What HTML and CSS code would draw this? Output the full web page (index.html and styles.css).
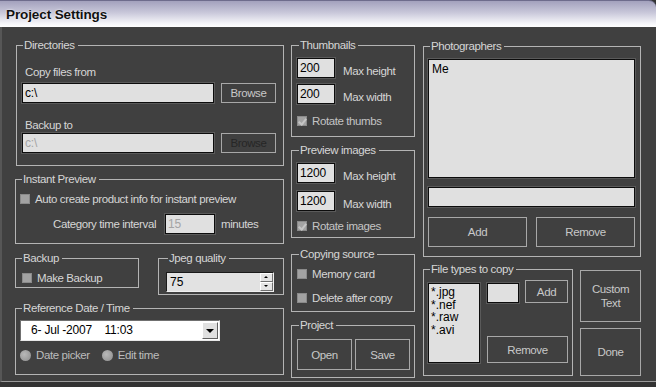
FILE: index.html
```html
<!DOCTYPE html>
<html lang="en">
<head>
<meta charset="UTF-8" />
<title>Project Settings</title>
<link rel="stylesheet" href="styles.css">
</head>
<body>
<div class="window">
  <div class="titlebar"><span>Project Settings</span></div>
  <div class="client">

    <div class="col col-left">
      <div class="group dirs">
        <div class="gtitle">Directories</div>
        <div class="lbl first">Copy files from</div>
        <div class="row">
          <div class="tb path">c:\</div>
          <div class="btn browse">Browse</div>
        </div>
        <div class="lbl second">Backup to</div>
        <div class="row">
          <div class="tb path disabled">c:\</div>
          <div class="btn browse off">Browse</div>
        </div>
      </div>

      <div class="group instant">
        <div class="gtitle">Instant Preview</div>
        <div class="check auto"><span class="box"></span>Auto create product info for instant preview</div>
        <div class="row interval">
          <span class="ilabel">Category time interval</span>
          <div class="tb mins disabled">15</div>
          <span>minutes</span>
        </div>
      </div>

      <div class="pair">
        <div class="group backup">
          <div class="gtitle">Backup</div>
          <div class="check"><span class="box"></span>Make Backup</div>
        </div>
        <div class="group jpeg">
          <div class="gtitle">Jpeg quality</div>
          <div class="spin">
            <span class="spin-val">75</span>
            <span class="spin-btns"><i class="up"></i><i class="down"></i></span>
          </div>
        </div>
      </div>

      <div class="group refdate">
        <div class="gtitle">Reference Date / Time</div>
        <div class="combo">
          <span class="combo-val">6- Jul -2007&nbsp;&nbsp;&nbsp;&nbsp;11:03</span>
          <span class="combo-btn"><i></i></span>
        </div>
        <div class="radios">
          <span class="radio"><span class="dot"></span>Date picker</span>
          <span class="radio"><span class="dot"></span>Edit time</span>
        </div>
      </div>
    </div>

    <div class="col col-mid">
      <div class="group thumbs">
        <div class="gtitle">Thumbnails</div>
        <div class="num-row r1"><div class="tb num">200</div><span>Max height</span></div>
        <div class="num-row"><div class="tb num">200</div><span>Max width</span></div>
        <div class="check checked rot"><span class="box"></span>Rotate thumbs</div>
      </div>

      <div class="group previews">
        <div class="gtitle">Preview images</div>
        <div class="num-row r1"><div class="tb num">1200</div><span>Max height</span></div>
        <div class="num-row"><div class="tb num">1200</div><span>Max width</span></div>
        <div class="check checked rot"><span class="box"></span>Rotate images</div>
      </div>

      <div class="group copying">
        <div class="gtitle">Copying source</div>
        <div class="check c1"><span class="box"></span>Memory card</div>
        <div class="check c2"><span class="box"></span>Delete after copy</div>
      </div>

      <div class="group project">
        <div class="gtitle">Project</div>
        <div class="row btns">
          <div class="btn pbtn">Open</div>
          <div class="btn pbtn">Save</div>
        </div>
      </div>
    </div>

    <div class="col col-right">
      <div class="group photogs">
        <div class="gtitle">Photographers</div>
        <div class="list big">Me</div>
        <div class="tb name"></div>
        <div class="row btns">
          <div class="btn wbtn">Add</div>
          <div class="btn wbtn">Remove</div>
        </div>
      </div>

      <div class="bottom-row">
        <div class="group filetypes">
          <div class="gtitle">File types to copy</div>
          <div class="ft-body">
            <div class="list small">
              <div>*.jpg</div>
              <div>*.nef</div>
              <div>*.raw</div>
              <div>*.avi</div>
            </div>
            <div class="ft-side">
              <div class="row">
                <div class="tb ext"></div>
                <div class="btn addext">Add</div>
              </div>
              <div class="btn rmext">Remove</div>
            </div>
          </div>
        </div>
        <div class="side-btns">
          <div class="btn custom">Custom<br>Text</div>
          <div class="btn done">Done</div>
        </div>
      </div>
    </div>

  </div>
</div>
</body>
</html>
```

FILE: styles.css
```css
body {
  margin: 0;
  background: #333;
  font-family: "Liberation Sans", Arial, sans-serif;
  font-size: 11.5px;
  letter-spacing: -0.4px;
  color: #d6d6d6;
}
.window {
  width: 656px;
  height: 387px;
  background: #333;
}
.titlebar {
  height: 27px;
  border-top: 1px solid #6e6c8c;
  border-radius: 0 7px 0 0;
  background: linear-gradient(#a3a1bd, #c9c8da 45%, #f4f4f8 85%, #ffffff);
  box-sizing: border-box;
  padding: 6px 0 0 6px;
  font-size: 13.5px;
  font-weight: bold;
  letter-spacing: -0.1px;
  color: #111;
  text-shadow: 0 0 2px #fff;
}
.client {
  height: 355px;
  box-sizing: border-box;
  background: #404040;
  border-left: 2px solid #565656;
  border-bottom: 1px solid #9a9a9a;
  display: grid;
  grid-template-columns: 269px 124px 219px;
  column-gap: 7px;
  padding: 18px 0 0 13px;
  align-items: start;
}
.col {
  display: flex;
  flex-direction: column;
}
.col-right {
  margin-left: 1px;
}

/* group boxes */
.group {
  border: 1px solid #b4b4b4;
  box-sizing: border-box;
  padding: 0 4px;
}
.gtitle {
  display: block;
  width: fit-content;
  margin: -8px 0 0 2px;
  padding: 0 3px 0 1px;
  background: #404040;
  line-height: 14px;
  height: 14px;
}
.row {
  display: flex;
  align-items: center;
}

/* text boxes */
.tb {
  background: #e0e0e0;
  border: 1px solid #0c0c0c;
  box-shadow: 0 0 0 1px #5a5a5a;
  box-sizing: border-box;
  height: 20px;
  line-height: 18px;
  padding-left: 2px;
  color: #000;
  font-size: 12px;
  letter-spacing: -0.2px;
}
.tb.disabled {
  color: #a4a4a4;
}
.btn {
  border: 1px solid #a8a8a8;
  box-sizing: border-box;
  display: flex;
  align-items: center;
  justify-content: center;
  text-align: center;
  color: #c8c8c8;
}
.btn.off {
  color: #262626;
}

/* checkboxes + radios */
.check {
  display: flex;
  align-items: center;
  line-height: 14px;
  padding-left: 0;
}
.box {
  width: 10px;
  height: 10px;
  box-sizing: border-box;
  background: #a2a2a2;
  border: 1px solid #8a8a8a;
  margin: 0 5px 0 0;
  position: relative;
}
.check.checked .box::after {
  content: "";
  position: absolute;
  left: 2px;
  top: 0;
  width: 3px;
  height: 6px;
  border: solid #c4c4c4;
  border-width: 0 2px 2px 0;
  transform: rotate(40deg);
}
.radio {
  display: inline-flex;
  align-items: center;
}
.dot {
  width: 11px;
  height: 11px;
  border-radius: 50%;
  background: radial-gradient(circle at 40% 40%, #b8b8b8, #8c8c8c);
  margin-right: 5px;
}

/* directories */
.dirs {
  height: 121px;
  margin-left: 1px;
}
.lbl {
  line-height: 14px;
  padding-left: 4px;
}
.lbl.first {
  margin-top: 13px;
}
.lbl.second {
  margin-top: 15px;
}
.dirs .row {
  margin-top: 4px;
}
.dirs .lbl.second + .row {
  margin-top: 1px;
}
.tb.path {
  width: 192px;
  margin-left: 1px;
}
.browse {
  width: 55px;
  height: 20px;
  margin-left: 7px;
}

/* instant preview */
.instant {
  height: 65px;
  margin-top: 13px;
}
.check.auto {
  margin-top: 6px;
}
.interval {
  margin-top: 8px;
}
.ilabel {
  margin-left: 33px;
  width: 112px;
}
.tb.mins {
  width: 50px;
  margin-right: 6px;
}

/* backup + jpeg */
.pair {
  display: flex;
  justify-content: space-between;
  align-items: flex-start;
  margin-top: 14px;
}
.backup {
  width: 124px;
  height: 30px;
}
.backup .check {
  margin-top: 6px;
  padding-left: 2px;
}
.jpeg {
  width: 126px;
  height: 37px;
  padding-left: 7px;
}
.spin {
  margin-top: 7px;
  width: 108px;
  height: 20px;
  box-sizing: border-box;
  background: #e2e2e2;
  border: 1px solid;
  border-color: #1a1a1a #f0f0f0 #f0f0f0 #1a1a1a;
  display: flex;
  color: #000;
  font-size: 12px;
  letter-spacing: 0;
}
.spin-val {
  flex: 1;
  line-height: 18px;
  padding-left: 3px;
}
.spin-btns {
  width: 13px;
  display: flex;
  flex-direction: column;
}
.spin-btns i {
  flex: 1;
  background: #e4e4e4;
  border: 1px solid;
  border-color: #fff #707070 #707070 #fff;
  position: relative;
}
.spin-btns i::after {
  content: "";
  position: absolute;
  left: 3px;
  top: 2px;
  border: 2px solid transparent;
}
.spin-btns .up::after {
  top: 0;
  border-bottom: 2px solid #000;
}
.spin-btns .down::after {
  top: 2px;
  border-top: 2px solid #000;
}

/* reference date */
.refdate {
  height: 67px;
  margin-top: 13px;
}
.combo {
  margin-top: 5px;
  width: 200px;
  height: 21px;
  box-sizing: border-box;
  background: #fff;
  border: 1px solid;
  border-color: #707070 #e8e8e8 #e8e8e8 #707070;
  display: flex;
  color: #000;
  font-size: 12px;
  letter-spacing: -0.2px;
}
.combo-val {
  flex: 1;
  line-height: 19px;
  padding-left: 10px;
}
.combo-btn {
  width: 16px;
  margin: 1px;
  box-sizing: border-box;
  background: #e0e0e0;
  border: 1px solid;
  border-color: #fff #606060 #606060 #fff;
  position: relative;
}
.combo-btn i {
  position: absolute;
  left: 3px;
  top: 6px;
  border: 4px solid transparent;
  border-top: 4px solid #000;
}
.radios {
  margin-top: 7px;
  display: flex;
  gap: 12px;
  line-height: 14px;
  color: #bcbcbc;
}

/* middle column */
.col-mid .group {
  padding-left: 5px;
}
.thumbs {
  height: 92px;
}
.num-row {
  display: flex;
  align-items: center;
  margin-top: 6px;
}
.previews .num-row + .num-row {
  margin-top: 8px;
}
.tb.num {
  width: 38px;
  margin-right: 8px;
}
.num-row span {
  padding-top: 6px;
}
.check.rot {
  margin-top: 10px;
  color: #c4c4c4;
}
.previews {
  height: 88px;
  margin-top: 13px;
}
.previews .check.rot {
  margin-top: 8px;
}
.copying {
  height: 58px;
  margin-top: 16px;
}
.check.c1 {
  margin-top: 6px;
}
.check.c2 {
  margin-top: 10px;
}
.project {
  height: 53px;
  margin-top: 13px;
}
.project .btns {
  margin-top: 7px;
  gap: 3px;
}
.pbtn {
  width: 55px;
  height: 31px;
}

/* right column */
.photogs {
  height: 211px;
  margin-top: 1px;
}
.list {
  background: #e0e0e0;
  border: 1px solid #0c0c0c;
  box-shadow: 0 0 0 1px #5a5a5a;
  box-sizing: border-box;
  color: #000;
  letter-spacing: 0;
}
.list.big {
  margin-top: 6px;
  width: 207px;
  height: 119px;
  padding: 2px 0 0 3px;
  font-size: 12px;
  line-height: 14px;
}
.tb.name {
  margin-top: 9px;
  width: 207px;
}
.photogs .btns {
  margin-top: 10px;
  gap: 9px;
}
.wbtn {
  width: 99px;
  height: 30px;
}
.bottom-row {
  display: flex;
  gap: 7px;
  margin-top: 12px;
}
.filetypes {
  width: 151px;
  height: 107px;
}
.ft-body {
  display: flex;
  margin-top: 7px;
}
.list.small {
  width: 52px;
  height: 80px;
  padding: 2px 0 0 2px;
  font-size: 12px;
  line-height: 12.7px;
}
.ft-side {
  margin-left: 7px;
  margin-top: -3px;
}
.tb.ext {
  width: 32px;
  height: 20px;
  margin-top: 3px;
}
.addext {
  width: 43px;
  height: 23px;
  margin-left: 6px;
}
.rmext {
  width: 81px;
  height: 27px;
  margin-top: 33px;
}
.side-btns {
  display: flex;
  flex-direction: column;
  gap: 6px;
  margin-top: 1px;
}
.custom {
  width: 61px;
  height: 52px;
  line-height: 14px;
}
.done {
  width: 61px;
  height: 48px;
}
```
